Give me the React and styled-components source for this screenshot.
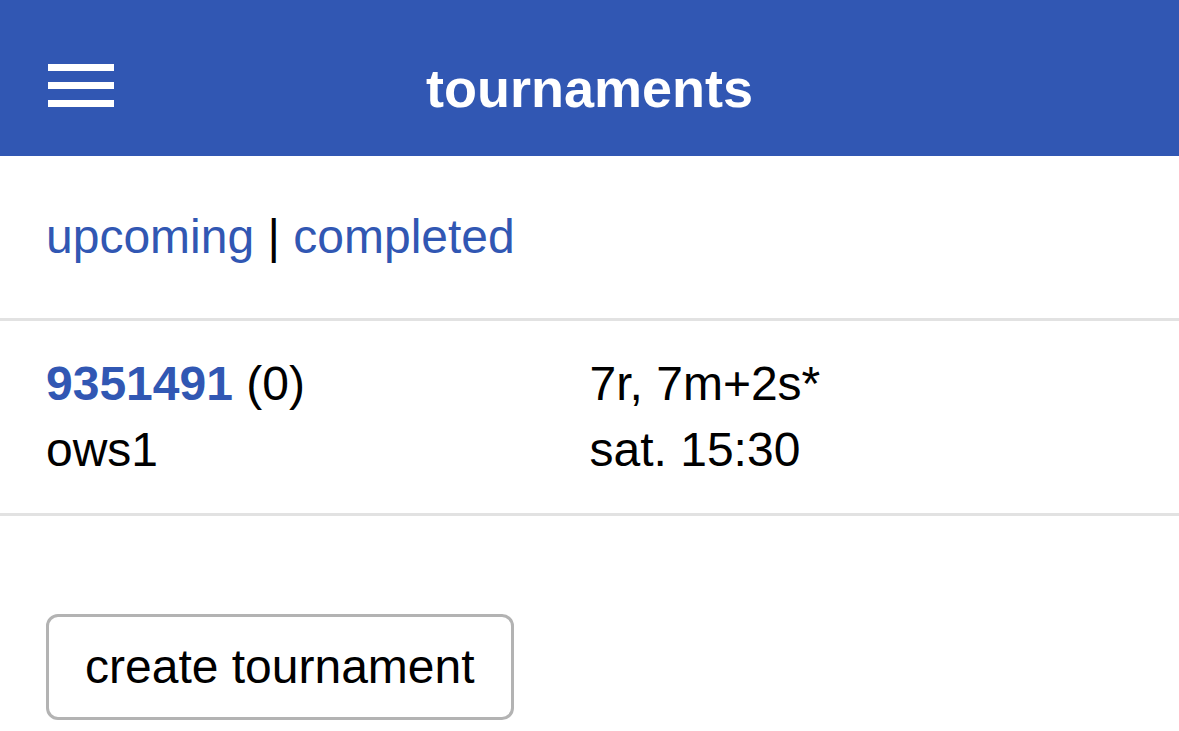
import React from 'react';
import styled, { createGlobalStyle } from 'styled-components';

const GlobalStyle = createGlobalStyle`
  body {
    margin: 0;
    background: #fff;
    font-family: 'Liberation Sans', Arial, sans-serif;
    color: #000;
  }
`;

const blue = '#3157b3';

const Header = styled.header`
  height: 156px;
  background: ${blue};
  display: grid;
  grid-template-columns: 1fr auto 1fr;
  align-items: center;
  padding: 14px 48px 0;
  box-sizing: border-box;
`;

const Burger = styled.div`
  display: flex;
  flex-direction: column;
  gap: 11px;
  width: 66px;
  span {
    display: block;
    height: 7px;
    background: #fff;
  }
`;

const Title = styled.h1`
  margin: 6px 0 0;
  color: #fff;
  font-size: 54px;
  font-weight: 700;
  line-height: 66px;
`;

const Section = styled.div`
  padding: ${({ pad }) => pad};
  border-bottom: ${({ divider }) => (divider ? '3px solid #e2e2e2' : 'none')};
  font-size: 48px;
  line-height: 66px;
`;

const Link = styled.a`
  color: ${blue};
  text-decoration: none;
  font-weight: ${({ bold }) => (bold ? 700 : 400)};
`;

const Row = styled.div`
  display: grid;
  grid-template-columns: 1fr 1fr;
`;

const Button = styled.button`
  font-family: 'Liberation Sans', Arial, sans-serif;
  font-size: 48px;
  line-height: 66px;
  color: #000;
  background: #fff;
  border: 3px solid #b3b3b3;
  border-radius: 12px;
  padding: 17px 36px;
`;

export default function App() {
  return (
    <>
      <GlobalStyle />
      <Header>
        <Burger>
          <span />
          <span />
          <span />
        </Burger>
        <Title>tournaments</Title>
        <div />
      </Header>
      <Section pad="48px 46px" divider>
        <Link href="#">upcoming</Link> | <Link href="#">completed</Link>
      </Section>
      <Section pad="30px 46px" divider>
        <Row>
          <div>
            <Link href="#" bold>9351491</Link> (0)
          </div>
          <div>7r, 7m+2s*</div>
          <div>ows1</div>
          <div>sat. 15:30</div>
        </Row>
      </Section>
      <Section pad="98px 46px 0">
        <Button>create tournament</Button>
      </Section>
    </>
  );
}
